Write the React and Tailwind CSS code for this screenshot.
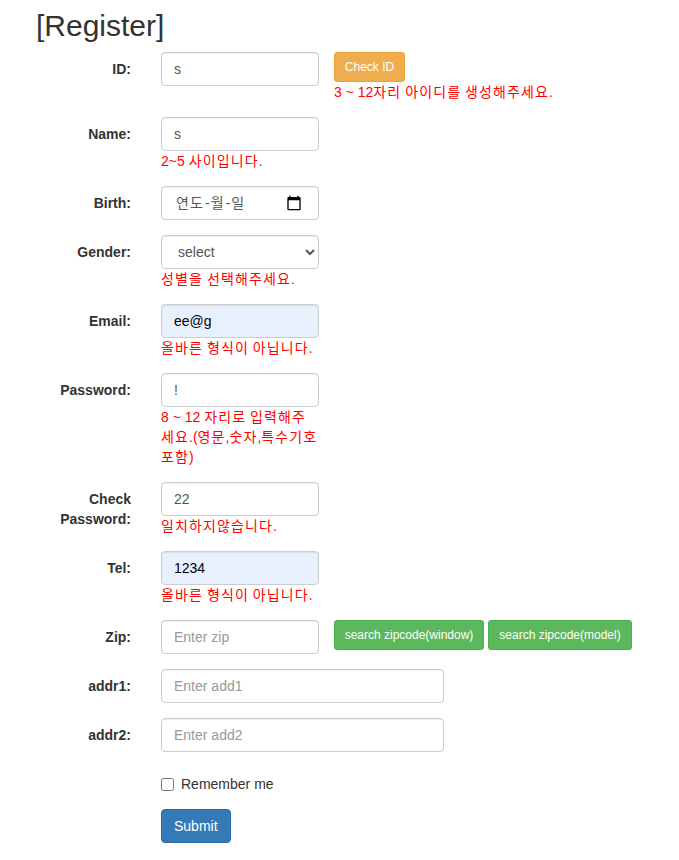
import React from "react";

const field =
  "block h-[34px] w-full rounded border border-[#ccc] px-3 py-1.5 text-sm leading-5 shadow-[inset_0_1px_1px_rgba(0,0,0,0.075)] outline-none placeholder:text-[#999]";
const plain = `${field} bg-white text-[#555]`;
const filled = `${field} bg-[#e8f0fe] text-black`;

// Hangul syllables are set on a full-em advance; Latin keeps its own widths.
function Korean({ text }) {
  return text.split(/([가-힣]+)/).map((part, i) =>
    i % 2 ? (
      <span key={i} className="tracking-[1.12px]">
        {part}
      </span>
    ) : (
      part
    )
  );
}

function Message({ children }) {
  return (
    <div className="leading-5 text-[#f00]">
      <Korean text={children} />
    </div>
  );
}

function Row({ label, wide, message, aside, children }) {
  return (
    <div className="mb-[15px] flex items-start">
      <label className="w-[95px] shrink-0 pt-[7px] text-right font-bold">{label}</label>
      <div className={wide ? "ml-[30px] w-[283px] shrink-0" : "ml-[30px] w-[158px] shrink-0"}>
        {children}
        {message && <Message>{message}</Message>}
      </div>
      {aside && <div className="ml-[15px] whitespace-nowrap">{aside}</div>}
    </div>
  );
}

function SmallButton({ className, children }) {
  return (
    <button
      type="button"
      className={`block h-[30px] rounded-[3px] border text-center text-xs leading-[18px] text-white ${className}`}
    >
      {children}
    </button>
  );
}

export default function App() {
  return (
    <form className="h-[860px] overflow-hidden bg-white pl-9 pt-[9px] font-['Liberation_Sans','Noto_Sans_CJK_KR',sans-serif] text-sm leading-5 text-[#333]">
      <h2 className="mb-2.5 text-[30px] leading-[33px]">[Register]</h2>

      <Row
        label="ID:"
        aside={
          <>
            <SmallButton className="w-[71px] border-[#eea236] bg-[#f0ad4e]">Check ID</SmallButton>
            <Message>3 ~ 12자리 아이디를 생성해주세요.</Message>
          </>
        }
      >
        <input className={plain} defaultValue="s" />
      </Row>
      <Row label="Name:" message="2~5 사이입니다.">
        <input className={plain} defaultValue="s" />
      </Row>
      <Row label="Birth:">
        <div className={`${plain} flex items-center justify-between`}>
          <span className="flex gap-px pl-0.5">
            <Korean text="연도-월-일" />
          </span>
          <svg className="mr-1 h-4 w-4" viewBox="0 0 24 24">
            <path
              d="M20 3h-1V1h-2v2H7V1H5v2H4c-1.1 0-2 .9-2 2v16c0 1.1.9 2 2 2h16c1.1 0 2-.9 2-2V5c0-1.1-.9-2-2-2zm0 18H4V8h16v13z"
              fill="#000"
            />
          </svg>
        </div>
      </Row>
      <Row label="Gender:" message="성별을 선택해주세요.">
        <select className={plain} defaultValue="select">
          <option>select</option>
        </select>
      </Row>
      <Row label="Email:" message="올바른 형식이 아닙니다.">
        <input className={filled} defaultValue="ee@g" />
      </Row>
      <Row
        label="Password:"
        message="8 ~ 12 자리로 입력해주세요.(영문,숫자,특수기호포함)"
      >
        <input className={plain} defaultValue="!" />
      </Row>
      <Row label="Check Password:" message="일치하지않습니다.">
        <input className={plain} defaultValue="22" />
      </Row>
      <Row label="Tel:" message="올바른 형식이 아닙니다.">
        <input className={filled} defaultValue="1234" />
      </Row>
      <Row
        label="Zip:"
        aside={
          <div className="flex gap-1">
            <SmallButton className="w-[150px] border-[#4cae4c] bg-[#5cb85c]">search zipcode(window)</SmallButton>
            <SmallButton className="w-[144px] border-[#4cae4c] bg-[#5cb85c]">search zipcode(model)</SmallButton>
          </div>
        }
      >
        <input className={plain} placeholder="Enter zip" />
      </Row>
      <Row label="addr1:" wide>
        <input className={plain} placeholder="Enter add1" />
      </Row>
      <Row label="addr2:" wide>
        <input className={plain} placeholder="Enter add2" />
      </Row>

      <label className="ml-[125px] mt-[22px] flex h-5 items-center gap-[7px]">
        <input type="checkbox" className="m-0 h-[13px] w-[13px]" />
        Remember me
      </label>
      <button
        type="button"
        className="ml-[125px] mt-[15px] block h-[34px] rounded border border-[#2e6da4] bg-[#337ab7] px-3 text-white"
      >
        Submit
      </button>
    </form>
  );
}
